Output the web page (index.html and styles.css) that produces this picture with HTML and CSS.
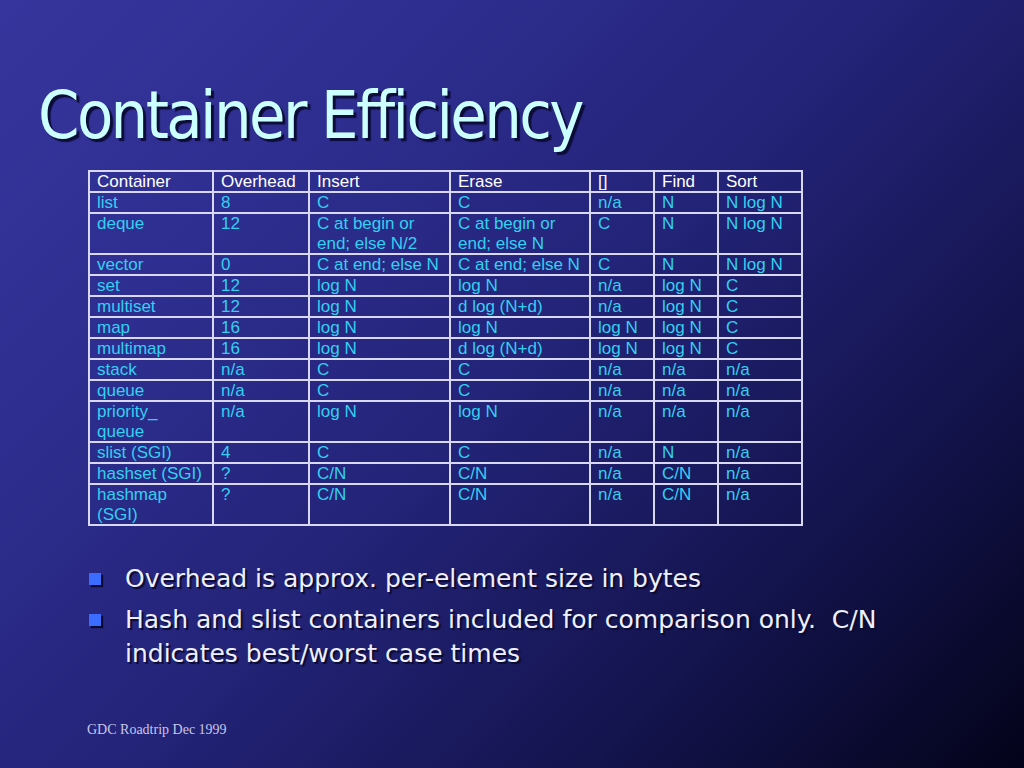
FILE: index.html
```html
<!DOCTYPE html>
<html>
<head>
<meta charset="utf-8">
<link rel="stylesheet" href="styles.css">
</head>
<body>
<div class="slide">
  <h1 class="title">Container Efficiency</h1>
  <table class="eff">
    <colgroup>
      <col class="c1"><col class="c2"><col class="c3"><col class="c4"><col class="c5"><col class="c6"><col class="c7">
    </colgroup>
    <tr class="head"><td>Container</td><td>Overhead</td><td>Insert</td><td>Erase</td><td>[]</td><td>Find</td><td>Sort</td></tr>
    <tr><td>list</td><td>8</td><td>C</td><td>C</td><td>n/a</td><td>N</td><td>N log N</td></tr>
    <tr class="dbl"><td>deque</td><td>12</td><td>C at begin or<br>end; else N/2</td><td>C at begin or<br>end; else N</td><td>C</td><td>N</td><td>N log N</td></tr>
    <tr><td>vector</td><td>0</td><td>C at end; else N</td><td>C at end; else N</td><td>C</td><td>N</td><td>N log N</td></tr>
    <tr><td>set</td><td>12</td><td>log N</td><td>log N</td><td>n/a</td><td>log N</td><td>C</td></tr>
    <tr><td>multiset</td><td>12</td><td>log N</td><td>d log (N+d)</td><td>n/a</td><td>log N</td><td>C</td></tr>
    <tr><td>map</td><td>16</td><td>log N</td><td>log N</td><td>log N</td><td>log N</td><td>C</td></tr>
    <tr><td>multimap</td><td>16</td><td>log N</td><td>d log (N+d)</td><td>log N</td><td>log N</td><td>C</td></tr>
    <tr><td>stack</td><td>n/a</td><td>C</td><td>C</td><td>n/a</td><td>n/a</td><td>n/a</td></tr>
    <tr><td>queue</td><td>n/a</td><td>C</td><td>C</td><td>n/a</td><td>n/a</td><td>n/a</td></tr>
    <tr class="dbl"><td>priority_<br>queue</td><td>n/a</td><td>log N</td><td>log N</td><td>n/a</td><td>n/a</td><td>n/a</td></tr>
    <tr><td>slist (SGI)</td><td>4</td><td>C</td><td>C</td><td>n/a</td><td>N</td><td>n/a</td></tr>
    <tr><td>hashset (SGI)</td><td>?</td><td>C/N</td><td>C/N</td><td>n/a</td><td>C/N</td><td>n/a</td></tr>
    <tr class="dbl"><td>hashmap<br>(SGI)</td><td>?</td><td>C/N</td><td>C/N</td><td>n/a</td><td>C/N</td><td>n/a</td></tr>
  </table>
  <ul class="bullets">
    <li>Overhead is approx. per-element size in bytes</li>
    <li>Hash and slist containers included for comparison only.&nbsp; C/N indicates best/worst case times</li>
  </ul>
  <div class="footer">GDC Roadtrip Dec 1999</div>
</div>
</body>
</html>
```

FILE: styles.css
```css
html, body {
  margin: 0;
  padding: 0;
}
.slide {
  position: relative;
  width: 1024px;
  height: 768px;
  overflow: hidden;
  background: linear-gradient(135deg, #35359d 0%, #2e2e90 25%, #232378 50%, #14144f 75%, #03031a 100%);
}
.title {
  margin: 0;
  padding: 76px 0 0 38px;
  font-family: "DejaVu Sans Condensed", "DejaVu Sans", sans-serif;
  font-weight: normal;
  font-size: 66px;
  letter-spacing: -2.6px;
  line-height: 80px;
  color: #ccffff;
  text-shadow: 3px 3px 1px #0c0c38;
}
.eff {
  margin: 14px 0 0 88px;
  border-collapse: collapse;
  table-layout: fixed;
  width: 713px;
  font-family: "Liberation Sans", Arial, sans-serif;
  font-size: 17px;
  line-height: 19px;
  color: #33d0f0;
  border: 2px solid #d8d8f0;
}
.eff td {
  border: 2px solid #d8d8f0;
  padding: 0 0 0 7px;
  vertical-align: top;
  white-space: nowrap;
}
.eff .dbl td {
  line-height: 19.5px;
}
.eff .head td {
  color: #ffffff;
}
.c1 { width: 124px; }
.c2 { width: 96px; }
.c3 { width: 141px; }
.c4 { width: 140px; }
.c5 { width: 64px; }
.c6 { width: 64px; }
.c7 { width: 84px; }
.bullets {
  list-style: none;
  margin: 36px 0 0 0;
  padding: 0 0 0 88px;
  width: 800px;
  font-family: "DejaVu Sans", sans-serif;
  font-size: 25px;
  line-height: 34px;
  color: #eef0ff;
  text-shadow: 2px 2px 1px #0a0a30;
}
.bullets li {
  position: relative;
  padding-left: 37px;
  margin-bottom: 7px;
}
.bullets li::before {
  content: "";
  position: absolute;
  left: 1px;
  top: 11px;
  width: 12px;
  height: 12px;
  background: #3a6cff;
  box-shadow: 2px 2px 1px #0a0a30;
}
.footer {
  position: absolute;
  top: 722px;
  left: 87px;
  font-family: "Liberation Serif", "Times New Roman", serif;
  font-size: 14px;
  color: #c8c8e8;
}
```
